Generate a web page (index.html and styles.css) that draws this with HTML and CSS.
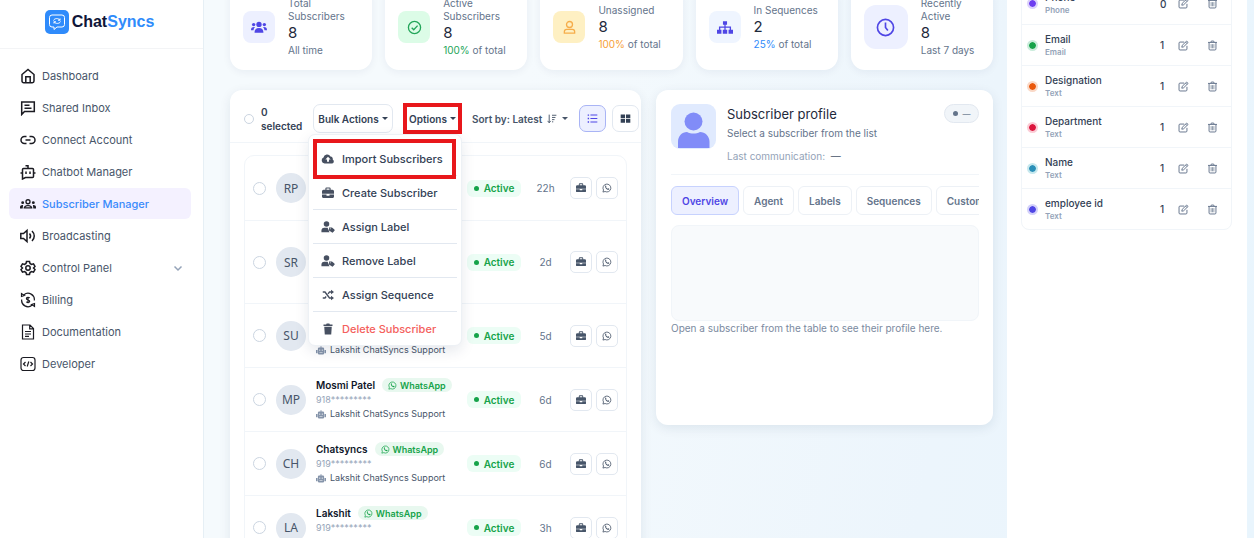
FILE: index.html
```html
<!DOCTYPE html>
<html lang="en">
<head>
  <meta charset="UTF-8">
  <meta name="viewport" content="width=device-width, initial-scale=1">
  <title>ChatSyncs - Subscriber Manager</title>
  <link rel="stylesheet" href="styles.css">
</head>
<body>

  <!-- shared icons -->
  <svg class="sprite" aria-hidden="true">
    <symbol id="i-case" viewBox="0 0 16 16">
      <path fill-rule="evenodd" d="M4.500 3.500V2A1.500 1.500 0 0 1 6 .5h4A1.500 1.500 0 0 1 11.500 2v1.500H14a2 2 0 0 1 2 2V9H0V5.500a2 2 0 0 1 2-2zM6 3.500h4V2H6z"/>
      <path d="M0 10h6v1.500h4V10h6v3a1.500 1.500 0 0 1-1.500 1.500h-13A1.500 1.500 0 0 1 0 13z"/>
    </symbol>
    <symbol id="i-wa" viewBox="0 0 16 16">
      <path fill="none" stroke="currentColor" stroke-width="1.300" d="M1.500 14.500l.9-3.300a6.300 6.300 0 1 1 2.500 2.400z"/>
      <path d="M5.300 4.400c.5-.5 1-.4 1.200.1l.5 1.200c.1.400-.5.800-.5 1.100.6 1.100 1.400 1.800 2.500 2.300.3 0 .8-.8 1.100-.7l1.300.6c.5.300.2 1.200-.3 1.600-2.300 1.600-7.300-3.200-5.800-6.200z"/>
    </symbol>
    <symbol id="i-bot" viewBox="0 0 16 14">
      <path fill-rule="evenodd" d="M7.200 0h1.600v2H11a2 2 0 0 1 2 2v7.500a2 2 0 0 1-2 2H5a2 2 0 0 1-2-2V4a2 2 0 0 1 2-2h2.200zM6 5.200a1 1 0 1 0 0 2 1 1 0 0 0 0-2zm4 0a1 1 0 1 0 0 2 1 1 0 0 0 0-2zM5.500 10v.8h5V10zM0 6h2.400v5.500H1a1 1 0 0 1-1-1zm13.600 0H16v4.500a1 1 0 0 1-1 1h-1.400z"/>
    </symbol>
    <symbol id="i-edit" viewBox="0 0 16 16">
      <g fill="none" stroke="currentColor" stroke-width="1.400">
        <path d="M9 3H3a1.500 1.500 0 0 0-1.500 1.500v8.500A1.500 1.500 0 0 0 3 14.500h8.500A1.500 1.500 0 0 0 13 13V8.500"/>
        <path d="M5.500 10.500l.6-2.700 6.500-6.300 2 2-6.400 6.400zM11 3l2 2"/>
      </g>
    </symbol>
    <symbol id="i-bin" viewBox="0 0 16 16">
      <g fill="none" stroke="currentColor" stroke-width="1.400">
        <path d="M1.500 3.500h13M5.500 3.500l.8-2h3.400l.8 2M3 3.500v9.500A1.500 1.500 0 0 0 4.500 14.500h7A1.500 1.500 0 0 0 13 13V3.500"/>
        <path stroke-width="1" d="M6 6v6M8 6v6M10 6v6"/>
      </g>
    </symbol>
    <symbol id="i-user-tag" viewBox="0 0 18 16">
      <circle cx="7" cy="4" r="3.700"/>
      <path d="M0 15v-2c0-2.500 1.800-4 4-4h4.500l2.500 6z"/>
      <path fill-rule="evenodd" d="M10.300 8.500h4L18.500 12l-3.500 3.700-4.700-3.200zM12 9.700a.7.700 0 1 0 0 1.400.7.700 0 0 0 0-1.400z"/>
    </symbol>
  </svg>

  <div class="app">
    <aside class="sidebar">
      <a class="brand" href="#">
        <svg class="brand-logo" viewBox="0 0 24 24">
          <rect width="24" height="24" rx="5" fill="#2f8bfb"/>
          <g fill="none" stroke="#fff" stroke-width="1">
            <path d="M7 5h10a2.500 2.500 0 0 1 2.500 2.500v7A2.500 2.500 0 0 1 17 17h-5l-3 2.500V17H7a2.500 2.500 0 0 1-2.500-2.500v-7A2.500 2.500 0 0 1 7 5z"/>
            <path d="M8.500 10.500c1-2.500 5-2.500 6.500-.3V8.500M15 10.200h-2M15.500 11.500c-1 2.500-5 2.500-6.500.3v1.700M9 11.800h2"/>
          </g>
        </svg>
        <span class="brand-name">Chat<span>Syncs</span></span>
      </a>

      <nav class="menu">
        <a href="#">
          <svg viewBox="0 0 16 16"><path d="M2 6.500L8 1.500l6 5V13a1.700 1.700 0 0 1-1.700 1.700H3.700A1.700 1.700 0 0 1 2 13zM5.800 14.500V8.800h4.400v5.700"/></svg>
          Dashboard
        </a>
        <a href="#">
          <svg viewBox="0 0 16 16"><path d="M1.700 14.500V2h12.600v9.500H4.500zM4.500 5.300h5M4.500 8.200h7"/></svg>
          Shared Inbox
        </a>
        <a href="#">
          <svg viewBox="0 0 16 16"><path d="M6.500 4.500h-2a3.500 3.500 0 0 0 0 7h2M9.500 4.500h2a3.500 3.500 0 0 1 0 7h-2M5.500 8h5"/></svg>
          Connect Account
        </a>
        <a href="#">
          <svg viewBox="0 0 16 16"><path d="M3.500 4.500h9a1 1 0 0 1 1 1v7a1 1 0 0 1-1 1H5.500l-3 1.500V5.500a1 1 0 0 1 1-1zM8 4.500V1.700H5.500M2.500 9H.5M13.500 9h2M6 7.500v2.500M10 7.500v2.500"/></svg>
          Chatbot Manager
        </a>
        <a class="active" href="#">
          <svg class="solid" viewBox="0 0 18 16">
            <circle cx="3" cy="6.500" r="1.600"/><circle cx="15" cy="6.500" r="1.600"/>
            <path d="M0 13v-1.500C0 10 1.500 9 3.500 9.200L3 13zM18 13v-1.500c0-1.500-1.500-2.500-3.500-2.300L15 13z"/>
            <path fill-rule="evenodd" d="M9 2.500a3 3 0 1 1 0 6 3 3 0 0 1 0-6zm0 1.500a1.500 1.500 0 1 0 0 3 1.500 1.500 0 0 0 0-3zM4 13c0-2.500 2-4 5-4s5 1.500 5 4zm2-1.300h6c-.7-1-1.700-1.300-3-1.300s-2.300.3-3 1.300z"/>
          </svg>
          Subscriber Manager
        </a>
        <a href="#">
          <svg viewBox="0 0 16 16"><path d="M.8 5.500h2.700L7 2.500v11L3.500 10.500H.8zM9.500 5.500c1.300 1.500 1.300 3.500 0 5M12 3c3 3 3 7 0 10"/></svg>
          Broadcasting
        </a>
        <a href="#">
          <svg viewBox="0 0 16 16"><path d="M6.500 1.500h3l.5 2 1.500.9 2-.6 1.500 2.600-1.500 1.600 1.500 1.600-1.500 2.600-2-.6-1.500.9-.5 2h-3l-.5-2-1.500-.9-2 .6L1 9.600 2.500 8 1 6.400l1.500-2.600 2 .6L6 3.500z"/><circle cx="8" cy="8" r="2.200"/></svg>
          Control Panel
          <svg class="chevron" viewBox="0 0 10 10"><path d="M1.500 3.500L5 7l3.500-3.500"/></svg>
        </a>
        <a href="#">
          <svg class="thin" viewBox="0 0 16 16"><path d="M4 2.800a6.300 6.300 0 0 1 10.300 5.700M12 13.200A6.300 6.300 0 0 1 1.700 7.500M4.500 3.500L1.500 4.500V1.500zM11.500 12.500l3-1v3zM9.700 6c-.8-1-3.300-.8-3.300.7 0 1.600 3.300.9 3.300 2.600 0 1.500-2.700 1.600-3.400.5M8 4.700v6.600"/></svg>
          Billing
        </a>
        <a href="#">
          <svg class="thin" viewBox="0 0 16 16"><path d="M2.500 1h7.500l3.500 3.500V15h-11zM9.700 1v3.800h3.800M5 7.500h6M5 10h6M5 12.300h4"/></svg>
          Documentation
        </a>
        <a href="#">
          <svg class="thin" viewBox="0 0 16 16"><rect x="1" y="1.500" width="14" height="13" rx="2.500"/><path d="M5.500 6L3.500 8l2 2M10.500 6l2 2-2 2M8.800 5.500l-1.600 5"/></svg>
          Developer
        </a>
      </nav>
    </aside>

    <main class="content">
      <section class="stats">
        <div class="stat">
          <div class="stat-icon indigo">
            <svg viewBox="0 0 18 14"><circle cx="9" cy="3.500" r="3"/><circle cx="3" cy="3.700" r="1.900"/><circle cx="15" cy="3.700" r="1.900"/><path d="M4 13c0-3.500 1.500-5.500 5-5.500s5 2 5 5.500zM0 10c0-2.500 1-3.700 4.500-3.500C3.500 7.500 3 8.500 2.900 10zM18 10c0-2.500-1-3.700-4.500-3.500 1 1 1.500 2 1.600 3.500z"/></svg>
          </div>
          <div>
            <div class="stat-label">Total Subscribers</div>
            <div class="stat-value">8</div>
            <div class="stat-note">All time</div>
          </div>
        </div>
        <div class="stat">
          <div class="stat-icon green">
            <svg class="line" viewBox="0 0 16 16"><circle cx="8" cy="8" r="6.500"/><path d="M5 8.200l2.200 2.200L11.300 6"/></svg>
          </div>
          <div>
            <div class="stat-label">Active Subscribers</div>
            <div class="stat-value">8</div>
            <div class="stat-note"><b class="c-green">100%</b> of total</div>
          </div>
        </div>
        <div class="stat">
          <div class="stat-icon yellow">
            <svg class="line" viewBox="0 0 16 16"><circle cx="8" cy="4.800" r="3.200"/><path d="M2.500 14v-1.500c0-1.600 1-2.500 2.500-2.500h6c1.500 0 2.500.9 2.500 2.500V14z"/></svg>
          </div>
          <div>
            <div class="stat-label">Unassigned</div>
            <div class="stat-value">8</div>
            <div class="stat-note"><b class="c-orange">100%</b> of total</div>
          </div>
        </div>
        <div class="stat">
          <div class="stat-icon blue">
            <svg viewBox="0 0 18 14"><path d="M6.700 0h4.600v4H9.700v2h6.100v3.500H18V14h-5V9.500h1.300V7.300H9.700v2.200h1.800V14h-5V9.500h1.800V7.300H3.700v2.200H5V14H0V9.500h2.200V6h6.100V4H6.700z"/></svg>
          </div>
          <div>
            <div class="stat-label">In Sequences</div>
            <div class="stat-value">2</div>
            <div class="stat-note"><b class="c-blue">25%</b> of total</div>
          </div>
        </div>
        <div class="stat">
          <div class="stat-icon indigo large">
            <svg class="line" viewBox="0 0 16 16"><circle cx="8" cy="8" r="6.800"/><path d="M8 3.800V8l2 2.500"/></svg>
          </div>
          <div>
            <div class="stat-label">Recently Active</div>
            <div class="stat-value">8</div>
            <div class="stat-note">Last 7 days</div>
          </div>
        </div>
      </section>

      <div class="panels">
        <section class="panel list-panel">
          <div class="toolbar">
            <input class="round small" type="checkbox" id="selectAll">
            <label class="selected" for="selectAll">0 selected</label>
            <button class="btn bulk">Bulk Actions <i class="caret"></i></button>
            <div class="dropdown">
              <button class="btn options marked">Options <i class="caret"></i></button>
              <div class="dropdown-menu">
                <button class="item marked">
                  <svg viewBox="0 0 18 16"><path fill-rule="evenodd" d="M4.500 14A4.200 4.200 0 0 1 3 6a5 5 0 0 1 9.300-1.500 3.500 3.500 0 0 1 3 4A3 3 0 0 1 14.500 14zM9 5L5.500 8.700h2.200v3h2.600v-3h2.200z"/></svg>
                  Import Subscribers
                </button>
                <button class="item"><svg viewBox="0 0 16 16"><use href="#i-case"/></svg>Create Subscriber</button>
                <button class="item"><svg viewBox="0 0 18 16"><use href="#i-user-tag"/></svg>Assign Label</button>
                <button class="item"><svg viewBox="0 0 18 16"><use href="#i-user-tag"/></svg>Remove Label</button>
                <button class="item">
                  <svg viewBox="0 0 16 16"><path fill="none" stroke="currentColor" stroke-width="1.800" d="M1 4h3l6 8h3M1 12h3l1.500-2M8 6.500L10 4h3"/><path d="M12 1l4 3-4 3zM12 9l4 3-4 3z"/></svg>
                  Assign Sequence
                </button>
                <button class="item danger">
                  <svg viewBox="0 0 16 16"><path d="M2 2h3.500l.7-1.200h3.600l.7 1.200H14v2H2zM3 5h10l-.7 10.300H3.700z"/></svg>
                  Delete Subscriber
                </button>
              </div>
            </div>
            <button class="sort">
              Sort by: Latest
              <svg viewBox="0 0 16 16"><path fill="none" stroke="currentColor" stroke-width="1.500" d="M3.500 1v13M1 11l2.500 3L6 11M8 2h7M8 5.500h5.500M8 9h4M8 12.500h2"/></svg>
              <i class="caret"></i>
            </button>
            <div class="views">
              <button class="view active" aria-label="List view"><svg viewBox="0 0 16 16"><path d="M1 2h2v2H1zM1 7h2v2H1zM1 12h2v2H1zM5 2.300h10v1.400H5zM5 7.300h10v1.400H5zM5 12.300h10v1.400H5z"/></svg></button>
              <button class="view" aria-label="Grid view"><svg viewBox="0 0 16 16"><path d="M1 2h6.300v5.500H1zM8.700 2H15v5.500H8.700zM1 8.700h6.300V14H1zM8.700 8.700H15V14H8.700z"/></svg></button>
            </div>
          </div>

          <div class="table-wrap">
            <table class="subscribers">
              <tr>
                <td class="col-check"><input class="round" type="checkbox" aria-label="Select RP"></td>
                <td class="col-avatar"><span class="avatar">RP</span></td>
                <td></td>
                <td class="col-status"><span class="status">Active</span></td>
                <td class="col-time">22h</td>
                <td class="col-actions">
                  <button class="act" aria-label="Profile"><svg><use href="#i-case"/></svg></button>
                  <button class="act" aria-label="WhatsApp"><svg><use href="#i-wa"/></svg></button>
                </td>
              </tr>
              <tr class="tall">
                <td class="col-check"><input class="round" type="checkbox" aria-label="Select SR"></td>
                <td class="col-avatar"><span class="avatar">SR</span></td>
                <td></td>
                <td class="col-status"><span class="status">Active</span></td>
                <td class="col-time">2d</td>
                <td class="col-actions">
                  <button class="act" aria-label="Profile"><svg><use href="#i-case"/></svg></button>
                  <button class="act" aria-label="WhatsApp"><svg><use href="#i-wa"/></svg></button>
                </td>
              </tr>
              <tr>
                <td class="col-check"><input class="round" type="checkbox" aria-label="Select SU"></td>
                <td class="col-avatar"><span class="avatar">SU</span></td>
                <td class="col-info">
                  <div class="name">&nbsp;</div>
                  <div class="number">&nbsp;</div>
                  <div class="bot"><svg><use href="#i-bot"/></svg>Lakshit ChatSyncs Support</div>
                </td>
                <td class="col-status"><span class="status">Active</span></td>
                <td class="col-time">5d</td>
                <td class="col-actions">
                  <button class="act" aria-label="Profile"><svg><use href="#i-case"/></svg></button>
                  <button class="act" aria-label="WhatsApp"><svg><use href="#i-wa"/></svg></button>
                </td>
              </tr>
              <tr>
                <td class="col-check"><input class="round" type="checkbox" aria-label="Select Mosmi Patel"></td>
                <td class="col-avatar"><span class="avatar">MP</span></td>
                <td class="col-info">
                  <div class="name">Mosmi Patel <span class="tag"><svg><use href="#i-wa"/></svg>WhatsApp</span></div>
                  <div class="number">918*********</div>
                  <div class="bot"><svg><use href="#i-bot"/></svg>Lakshit ChatSyncs Support</div>
                </td>
                <td class="col-status"><span class="status">Active</span></td>
                <td class="col-time">6d</td>
                <td class="col-actions">
                  <button class="act" aria-label="Profile"><svg><use href="#i-case"/></svg></button>
                  <button class="act" aria-label="WhatsApp"><svg><use href="#i-wa"/></svg></button>
                </td>
              </tr>
              <tr>
                <td class="col-check"><input class="round" type="checkbox" aria-label="Select Chatsyncs"></td>
                <td class="col-avatar"><span class="avatar">CH</span></td>
                <td class="col-info">
                  <div class="name">Chatsyncs <span class="tag"><svg><use href="#i-wa"/></svg>WhatsApp</span></div>
                  <div class="number">919*********</div>
                  <div class="bot"><svg><use href="#i-bot"/></svg>Lakshit ChatSyncs Support</div>
                </td>
                <td class="col-status"><span class="status">Active</span></td>
                <td class="col-time">6d</td>
                <td class="col-actions">
                  <button class="act" aria-label="Profile"><svg><use href="#i-case"/></svg></button>
                  <button class="act" aria-label="WhatsApp"><svg><use href="#i-wa"/></svg></button>
                </td>
              </tr>
              <tr>
                <td class="col-check"><input class="round" type="checkbox" aria-label="Select Lakshit"></td>
                <td class="col-avatar"><span class="avatar">LA</span></td>
                <td class="col-info">
                  <div class="name">Lakshit <span class="tag"><svg><use href="#i-wa"/></svg>WhatsApp</span></div>
                  <div class="number">919*********</div>
                  <div class="bot"><svg><use href="#i-bot"/></svg>Lakshit ChatSyncs Support</div>
                </td>
                <td class="col-status"><span class="status">Active</span></td>
                <td class="col-time">3h</td>
                <td class="col-actions">
                  <button class="act" aria-label="Profile"><svg><use href="#i-case"/></svg></button>
                  <button class="act" aria-label="WhatsApp"><svg><use href="#i-wa"/></svg></button>
                </td>
              </tr>
            </table>
          </div>
        </section>

        <section class="panel profile">
          <header class="profile-head">
            <svg class="profile-pic" viewBox="0 0 45 45">
              <rect width="45" height="45" rx="9" fill="#e0eafe"/>
              <circle cx="22.500" cy="17.500" r="9" fill="#818cf8"/>
              <path d="M7 44v-6c0-6 4-10 9-10 4 2 9 2 13 0 5 0 9.500 4 9.500 10v6z" fill="#818cf8"/>
            </svg>
            <div class="profile-text">
              <h2>Subscriber profile</h2>
              <p>Select a subscriber from the list</p>
              <p class="last">Last communication: <span>—</span></p>
            </div>
            <span class="state">—</span>
          </header>
          <div class="tabs">
            <button class="tab active">Overview</button>
            <button class="tab">Agent</button>
            <button class="tab">Labels</button>
            <button class="tab">Sequences</button>
            <button class="tab">Custom Fields</button>
          </div>
          <div class="placeholder"></div>
          <p class="hint">Open a subscriber from the table to see their profile here.</p>
        </section>
      </div>
    </main>

    <aside class="fields">
      <div class="fields-box">
        <table>
          <tr>
            <td class="dot-cell"><i class="dot violet"></i></td>
            <td><div class="f-name">Phone</div><div class="f-type">Phone</div></td>
            <td class="f-count">0</td>
            <td class="f-edit"><button aria-label="Edit"><svg><use href="#i-edit"/></svg></button></td>
            <td class="f-delete"><button aria-label="Delete"><svg><use href="#i-bin"/></svg></button></td>
          </tr>
          <tr>
            <td class="dot-cell"><i class="dot emerald"></i></td>
            <td><div class="f-name">Email</div><div class="f-type">Email</div></td>
            <td class="f-count">1</td>
            <td class="f-edit"><button aria-label="Edit"><svg><use href="#i-edit"/></svg></button></td>
            <td class="f-delete"><button aria-label="Delete"><svg><use href="#i-bin"/></svg></button></td>
          </tr>
          <tr>
            <td class="dot-cell"><i class="dot orange"></i></td>
            <td><div class="f-name">Designation</div><div class="f-type">Text</div></td>
            <td class="f-count">1</td>
            <td class="f-edit"><button aria-label="Edit"><svg><use href="#i-edit"/></svg></button></td>
            <td class="f-delete"><button aria-label="Delete"><svg><use href="#i-bin"/></svg></button></td>
          </tr>
          <tr>
            <td class="dot-cell"><i class="dot red"></i></td>
            <td><div class="f-name">Department</div><div class="f-type">Text</div></td>
            <td class="f-count">1</td>
            <td class="f-edit"><button aria-label="Edit"><svg><use href="#i-edit"/></svg></button></td>
            <td class="f-delete"><button aria-label="Delete"><svg><use href="#i-bin"/></svg></button></td>
          </tr>
          <tr>
            <td class="dot-cell"><i class="dot teal"></i></td>
            <td><div class="f-name">Name</div><div class="f-type">Text</div></td>
            <td class="f-count">1</td>
            <td class="f-edit"><button aria-label="Edit"><svg><use href="#i-edit"/></svg></button></td>
            <td class="f-delete"><button aria-label="Delete"><svg><use href="#i-bin"/></svg></button></td>
          </tr>
          <tr>
            <td class="dot-cell"><i class="dot indigo"></i></td>
            <td><div class="f-name">employee id</div><div class="f-type">Text</div></td>
            <td class="f-count">1</td>
            <td class="f-edit"><button aria-label="Edit"><svg><use href="#i-edit"/></svg></button></td>
            <td class="f-delete"><button aria-label="Delete"><svg><use href="#i-bin"/></svg></button></td>
          </tr>
        </table>
      </div>
    </aside>
  </div>

</body>
</html>
```

FILE: styles.css
```css
* {
  box-sizing: border-box;
}
body {
  margin: 0;
  font-family: Inter, "Liberation Sans", sans-serif;
  font-size: 10px;
  color: #334155;
  background-color: #f3f9fd;
}
button, input {
  font: inherit;
  color: inherit;
  margin: 0;
}
button {
  cursor: pointer;
}
h2, p {
  margin: 0;
}
a {
  text-decoration: none;
}
svg {
  fill: currentColor;
  flex: none;
}
.sprite {
  display: none;
}
.app {
  display: flex;
  height: 100vh;
  overflow: hidden;
  padding-right: 7px;
  background: linear-gradient(100deg, #f5fafd 0%, #f5fafd 40%, #ecf5fc 75%, #e9f5fd 100%);
}

/* sidebar */
.sidebar {
  flex: 0 0 204px;
  background-color: #fff;
  border-right: 1px solid #e6eff5;
}
.brand {
  display: flex;
  align-items: center;
  justify-content: center;
  gap: 3px;
  height: 49px;
  padding-bottom: 5px;
  padding-right: 4px;
  border-bottom: 1px solid #f3f4f6;
}
.brand-logo {
  width: 24px;
  height: 24px;
}
.brand-name {
  font: bold 16px "Liberation Sans", Arial, sans-serif;
  color: #0f1638;
}
.brand-name span {
  color: #2f8bfb;
}
.menu {
  display: flex;
  flex-direction: column;
  gap: 1px;
  padding: 11px 12px 0 9px;
}
.menu a {
  display: flex;
  align-items: center;
  gap: 6px;
  height: 31px;
  padding: 0 8px 0 11px;
  border-radius: 6px;
  font-size: 11px;
  color: #475569;
}
.menu svg {
  width: 16px;
  height: 16px;
  fill: none;
  stroke: #1b1b22;
  stroke-width: 1.5;
}
.menu svg.thin {
  stroke-width: 1.2;
}
.menu svg.solid {
  fill: #1b1b22;
  stroke: none;
}
.menu svg.chevron {
  width: 10px;
  height: 10px;
  margin-left: auto;
  stroke: #94a3b8;
}
.menu a.active {
  background-color: #f4f1ff;
  color: #3b8bfb;
  font-weight: 500;
}

/* stat cards */
.content {
  flex: 1;
  min-width: 0;
  display: flex;
  flex-direction: column;
  gap: 20px;
  padding: 0 14px 0 26px;
}
.stats {
  display: grid;
  grid-template-columns: repeat(5, 1fr);
  gap: 13px;
  margin-top: -16px;
}
.stat {
  display: flex;
  align-items: center;
  gap: 13px;
  height: 86px;
  padding: 0 13px;
  background-color: #fff;
  border-radius: 14px;
  box-shadow: 0 2px 8px rgba(15, 40, 80, 0.06);
}
.stat-icon {
  display: flex;
  align-items: center;
  justify-content: center;
  flex: none;
  width: 32px;
  height: 32px;
  border-radius: 8px;
}
.stat-icon svg {
  width: 16px;
  height: 13px;
}
.stat-icon svg.line {
  width: 15px;
  height: 15px;
  fill: none;
  stroke: currentColor;
  stroke-width: 1.4;
}
.stat-icon.indigo {
  background-color: #edf0ff;
  color: #4f46e5;
}
.stat-icon.green {
  background-color: #dcfce7;
  color: #22a559;
}
.stat-icon.yellow {
  background-color: #fef0c3;
  color: #f6ad4b;
}
.stat-icon.blue {
  background-color: #eff5ff;
  color: #4f46e5;
}
.stat-icon.large {
  width: 44px;
  height: 44px;
  border-radius: 12px;
}
.stat-icon.large svg {
  width: 19px;
  height: 19px;
}
.stat-label {
  line-height: 13px;
  color: #64748b;
}
.stat-value {
  font-size: 15px;
  line-height: 20px;
  color: #1e293b;
}
.stat-note {
  line-height: 14px;
  color: #64748b;
}
.stat-note b {
  font-weight: 400;
}
.c-green {
  color: #22a559;
}
.c-orange {
  color: #f6a035;
}
.c-blue {
  color: #2f8bfb;
}

/* panels */
.panels {
  display: grid;
  grid-template-columns: 411fr 337fr;
  gap: 15px;
  align-items: start;
}
.panel {
  min-width: 0;
  background-color: #fff;
  border-radius: 12px;
  box-shadow: 0 3px 12px rgba(15, 40, 80, 0.09);
}
.toolbar {
  display: flex;
  align-items: center;
  height: 53px;
  padding: 5px 2px 0 14px;
  border-bottom: 1px solid #f1f5f9;
  font-weight: 600;
}
.round {
  appearance: none;
  display: block;
  width: 13px;
  height: 13px;
  border: 1px solid #cbd5e1;
  border-radius: 50%;
  background-color: #fff;
}
.round.small {
  flex: none;
  width: 10px;
  height: 10px;
}
.selected {
  width: 44px;
  margin-left: 7px;
  margin-right: 8px;
  line-height: 14px;
}
.btn {
  display: flex;
  align-items: center;
  justify-content: center;
  gap: 3px;
  height: 29px;
  padding: 0;
  border: 1px solid #e2e8f0;
  border-radius: 7px;
  background-color: #fff;
  font-weight: 600;
  white-space: nowrap;
}
.bulk {
  width: 80px;
}
.caret {
  border: 3px solid transparent;
  border-top-color: currentColor;
  border-bottom: 0;
}
.dropdown {
  position: relative;
  margin-left: 10px;
}
.options {
  width: 59px;
}
.options.marked {
  height: 31px;
  border: 4px solid #e8171b;
  border-radius: 0;
}
.dropdown-menu {
  position: absolute;
  z-index: 5;
  top: 100%;
  right: 0;
  width: 154px;
  padding: 7px 4px 0;
  border: 1px solid #edf1f5;
  border-radius: 7px;
  background-color: #fff;
  box-shadow: 0 5px 14px rgba(15, 40, 80, 0.1);
}
.item {
  position: relative;
  display: flex;
  align-items: center;
  gap: 7px;
  width: 100%;
  height: 33px;
  padding: 0 8px;
  border: 0;
  background: none;
  font-size: 11px;
  font-weight: 500;
  white-space: nowrap;
}
.item + .item {
  height: 34px;
  border-top: 1px solid #e2e8f0;
}
.item svg {
  width: 14px;
  height: 12px;
  color: #475061;
}
.item.danger {
  color: #f4605c;
}
.item.marked::after {
  content: "";
  position: absolute;
  inset: -3px 1px -4px 0;
  z-index: 1;
  border: 4px solid #e8171b;
}
.sort {
  display: flex;
  align-items: center;
  gap: 5px;
  margin-left: 10px;
  padding: 0;
  border: 0;
  background: none;
  font-weight: 600;
  color: #475569;
  white-space: nowrap;
}
.sort svg {
  width: 10px;
  height: 10px;
}
.views {
  display: flex;
  gap: 6px;
  margin-left: auto;
}
.view {
  display: flex;
  align-items: center;
  justify-content: center;
  width: 27px;
  height: 27px;
  padding: 0;
  border: 1px solid #e2e8f0;
  border-radius: 7px;
  background-color: #fff;
}
.view svg {
  width: 11px;
  height: 11px;
}
.view.active {
  background-color: #edf0ff;
  border-color: #a9b4f5;
  color: #4f46e5;
}

/* subscribers table */
.table-wrap {
  margin: 12px 14px;
  border: 1px solid #f1f5f9;
  border-radius: 10px;
}
table {
  width: 100%;
  table-layout: fixed;
  border-collapse: separate;
  border-spacing: 0;
}
td {
  padding: 0;
}
.subscribers tr {
  height: 64px;
}
.subscribers tr.tall {
  height: 83px;
}
.subscribers tr + tr td {
  border-top: 1px solid #f1f5f9;
}
.subscribers .col-check {
  width: 31px;
  padding-left: 8px;
}
.col-avatar {
  width: 40px;
}
.avatar {
  display: flex;
  align-items: center;
  justify-content: center;
  width: 30px;
  height: 30px;
  border-radius: 50%;
  background-color: #e2e8f0;
  font: 12px "Noto Sans", sans-serif;
  color: #475569;
}
.col-status {
  width: 54px;
}
.col-time {
  width: 49px;
  text-align: center;
  color: #64748b;
}
.col-actions {
  width: 56px;
  white-space: nowrap;
  font-size: 0;
}
.act {
  display: inline-flex;
  align-items: center;
  justify-content: center;
  width: 22px;
  height: 22px;
  padding: 0;
  border: 1px solid #e2e8f0;
  border-radius: 5px;
  background-color: #fff;
  color: #475569;
}
.act + .act {
  margin-left: 4px;
}
.act svg {
  width: 10px;
  height: 10px;
}
.status {
  display: flex;
  align-items: center;
  justify-content: center;
  gap: 5px;
  height: 17px;
  border-radius: 6px;
  background-color: #ecfdf5;
  font-weight: 600;
  color: #16a34a;
}
.status::before, .state::before {
  content: "";
  width: 5px;
  height: 5px;
  border-radius: 50%;
  background-color: currentColor;
}
.name {
  display: flex;
  align-items: center;
  gap: 7px;
  height: 14px;
  font-weight: 600;
  color: #0f172a;
  white-space: nowrap;
}
.tag {
  display: flex;
  align-items: center;
  gap: 3px;
  height: 14px;
  padding: 0 6px;
  border-radius: 7px;
  background-color: #e8f8ef;
  font-size: 9px;
  font-weight: 600;
  color: #16a34a;
}
.tag svg {
  width: 9px;
  height: 9px;
}
.number {
  font-size: 9px;
  line-height: 15px;
  color: #94a3b8;
}
.bot {
  display: flex;
  align-items: center;
  gap: 4px;
  font-size: 9px;
  line-height: 14px;
  color: #475569;
  white-space: nowrap;
}
.bot svg {
  width: 10px;
  height: 9px;
  color: #8594aa;
}

/* profile */
.profile {
  height: 335px;
  padding: 14px 14px 0 15px;
}
.profile-head {
  display: flex;
  align-items: flex-start;
  height: 71px;
  border-bottom: 1px solid #f1f5f9;
}
.profile-pic {
  width: 45px;
  height: 45px;
}
.profile-text {
  flex: 1;
  margin-left: 11px;
}
.profile-text h2 {
  font-size: 13px;
  font-weight: 400;
  line-height: 20px;
  color: #1e293b;
}
.profile-text p {
  line-height: 19px;
  color: #64748b;
}
.profile-text .last {
  line-height: 26px;
  color: #94a3b8;
}
.last span {
  margin-left: 3px;
  color: #475569;
}
.state {
  display: flex;
  align-items: center;
  justify-content: center;
  gap: 5px;
  width: 35px;
  height: 19px;
  border: 1px solid #e2e8f0;
  border-radius: 10px;
  background-color: #f1f5f9;
  font-size: 8px;
  color: #64748b;
}
.tabs {
  display: flex;
  gap: 4px;
  margin-top: 11px;
  overflow: hidden;
}
.tab {
  flex: none;
  height: 29px;
  padding: 0 10px;
  border: 1px solid #edf1f6;
  border-radius: 6px;
  background-color: #fff;
  font-weight: 600;
  color: #64748b;
}
.tab.active {
  background-color: #edf0ff;
  border-color: #c7d2fe;
  color: #4f46e5;
}
.placeholder {
  height: 96px;
  margin-top: 10px;
  border: 1px solid #f1f5f9;
  border-radius: 8px;
  background-color: #f8fafc;
}
.hint {
  line-height: 14px;
  color: #7b8aa0;
}

/* custom fields */
.fields {
  flex: 0 0 240px;
  padding: 0 15px 0 14px;
  background-color: #fff;
}
.fields-box {
  margin-top: -18px;
  border: 1px solid #f1f5f9;
  border-radius: 8px;
}
.fields tr {
  height: 41px;
}
.fields tr + tr td {
  border-top: 1px solid #f1f5f9;
}
.fields .dot-cell {
  width: 23px;
  padding-left: 5px;
}
.dot {
  display: block;
  width: 11px;
  height: 11px;
  border: 2px solid;
  border-radius: 50%;
  background-clip: padding-box;
}
.dot.violet { background-color: #6d3df0; border-color: #dcd2fc; }
.dot.emerald { background-color: #16a34a; border-color: #c9ecdb; }
.dot.orange { background-color: #ea580c; border-color: #fad9c7; }
.dot.red { background-color: #dc143c; border-color: #fbcbd5; }
.dot.teal { background-color: #2a8fb8; border-color: #c6e8ee; }
.dot.indigo { background-color: #4f46e5; border-color: #d3d1fa; }
.f-name {
  line-height: 14px;
  font-weight: 500;
}
.f-type {
  font-size: 8px;
  line-height: 13px;
  font-weight: 600;
  color: #94a3b8;
}
.f-count {
  width: 18px;
  font-weight: 500;
}
.f-edit {
  width: 29px;
}
.f-delete {
  width: 24px;
}
.fields button {
  display: block;
  padding: 0;
  border: 0;
  background: none;
  color: #64748b;
}
.fields button svg {
  display: block;
  width: 11px;
  height: 11px;
}
```
